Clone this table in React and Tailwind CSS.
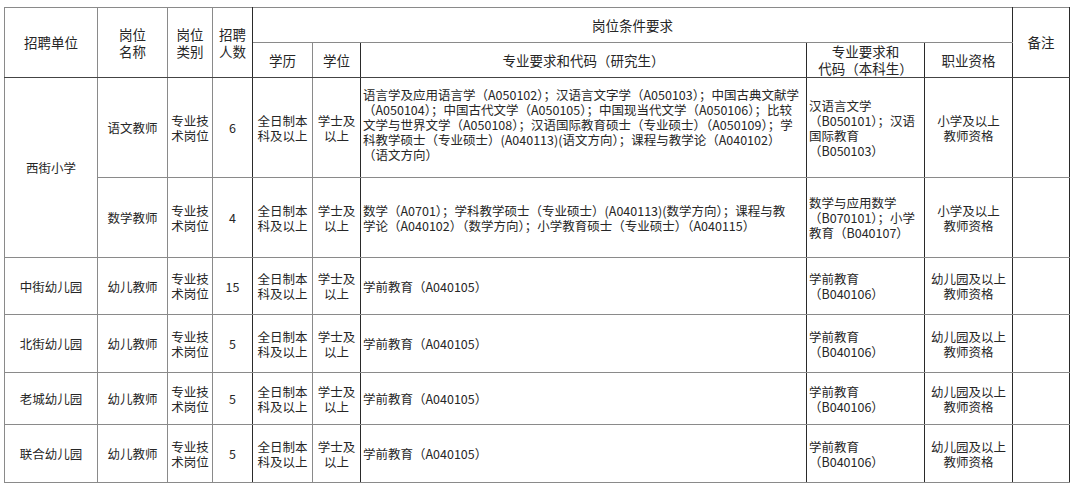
// border colours per column: [left, right]
const colBorder = [
  'border-l-[#8a8a8a] border-r-[#8a8a8a]',
  'border-l-[#8a8a8a] border-r-[#8a8a8a]',
  'border-l-[#8a8a8a] border-r-[#8a8a8a]',
  'border-l-[#8a8a8a] border-r-[#2a2a2a]',
  'border-l-[#2a2a2a] border-r-[#8a8a8a]',
  'border-l-[#8a8a8a] border-r-[#2a2a2a]',
  'border-l-[#2a2a2a] border-r-[#2a2a2a]',
  'border-l-[#2a2a2a] border-r-[#2a2a2a]',
  'border-l-[#2a2a2a] border-r-[#2a2a2a]',
  'border-l-[#2a2a2a] border-r-[#2a2a2a]',
];

const widths = [93, 70, 45, 40, 60, 48, 446, 118, 88, 57];

const cell = 'border border-solid border-t-[#8a8a8a] border-b-[#8a8a8a] align-middle p-0';

function Th({ col, className = '', children, ...rest }) {
  return (
    <th
      {...rest}
      className={`${cell} ${colBorder[col]} text-center font-normal text-[13.5px] leading-[17px] ${className}`}
    >
      {children}
    </th>
  );
}

function Td({ col, className = '', children, ...rest }) {
  return (
    <td {...rest} className={`${cell} ${colBorder[col]} text-[12.5px] leading-[15px] ${className}`}>
      {children}
    </td>
  );
}

const yuwen = [
  '语言学及应用语言学（A050102）；汉语言文字学（A050103）；中国古典文献学',
  '（A050104）；中国古代文学（A050105）；中国现当代文学（A050106）；比较',
  '文学与世界文学（A050108）；汉语国际教育硕士（专业硕士）（A050109）；学',
  '科教学硕士（专业硕士）(A040113)(语文方向）；课程与教学论（A040102）',
  '（语文方向）',
];

const shuxue = [
  '数学（A0701）；学科教学硕士（专业硕士）(A040113)(数学方向）；课程与教',
  '学论（A040102）（数学方向）；小学教育硕士（专业硕士）（A040115）',
];

const kinder = [
  { unit: '中街幼儿园', num: '15', h: 'h-[57px]' },
  { unit: '北街幼儿园', num: '5', h: 'h-[58px]' },
  { unit: '老城幼儿园', num: '5', h: 'h-[52px]' },
  { unit: '联合幼儿园', num: '5', h: 'h-[58px]' },
];

function Lines({ lines }) {
  return lines.map((l, i) => (
    <div key={i} className="whitespace-nowrap">
      {l}
    </div>
  ));
}

function Common({ num }) {
  return (
    <>
      <Td col={2} className="text-center">
        专业技
        <br />
        术岗位
      </Td>
      <Td col={3} className="text-center">
        {num}
      </Td>
      <Td col={4} className="text-center">
        全日制本
        <br />
        科及以上
      </Td>
      <Td col={5} className="text-center">
        学士及
        <br />
        以上
      </Td>
    </>
  );
}

export default function App() {
  return (
    <div className="w-[1080px] h-[494px] bg-white pt-[7px] pl-[4px] text-[#262626] font-['Noto_Sans_CJK_SC',sans-serif] overflow-hidden">
      <table className="table-fixed border-collapse w-[1065px] border-t border-t-[#2a2a2a]">
        <colgroup>
          {widths.map((w, i) => (
            <col key={i} style={{ width: w }} />
          ))}
        </colgroup>
        <thead>
          <tr className="h-[35px]">
            <Th col={0} rowSpan={2} className="border-b-[#444]">
              招聘单位
            </Th>
            <Th col={1} rowSpan={2} className="border-b-[#444]">
              岗位
              <br />
              名称
            </Th>
            <Th col={2} rowSpan={2} className="border-b-[#444]">
              岗位
              <br />
              类别
            </Th>
            <Th col={3} rowSpan={2} className="border-b-[#444]">
              招聘
              <br />
              人数
            </Th>
            <th
              colSpan={5}
              className={`${cell} border-l-[#2a2a2a] border-r-[#2a2a2a] text-center font-normal text-[13.5px] leading-[17px]`}
            >
              岗位条件要求
            </th>
            <Th col={9} rowSpan={2} className="border-b-[#444]">
              备注
            </Th>
          </tr>
          <tr className="h-[35px]">
            <Th col={4} className="border-b-[#444]">学历</Th>
            <Th col={5} className="border-b-[#444]">学位</Th>
            <Th col={6} className="border-b-[#444]">专业要求和代码（研究生）</Th>
            <Th col={7} className="border-b-[#444]">
              专业要求和
              <br />
              代码（本科生）
            </Th>
            <Th col={8} className="border-b-[#444]">职业资格</Th>
          </tr>
        </thead>
        <tbody>
          <tr className="h-[100px]">
            <Td col={0} rowSpan={2} className="text-center">
              西街小学
            </Td>
            <Td col={1} className="text-center">
              语文教师
            </Td>
            <Common num="6" />
            <Td col={6} className="pl-[2px] leading-[14px] pb-[6px]">
              <Lines lines={yuwen} />
            </Td>
            <Td col={7} className="pl-[2px]">
              <Lines lines={['汉语言文学', '（B050101）；汉语', '国际教育', '（B050103）']} />
            </Td>
            <Td col={8} className="text-center">
              小学及以上
              <br />
              教师资格
            </Td>
            <Td col={9} />
          </tr>
          <tr className="h-[80px]">
            <Td col={1} className="text-center">
              数学教师
            </Td>
            <Common num="4" />
            <Td col={6} className="pl-[2px] leading-[14px]">
              <Lines lines={shuxue} />
            </Td>
            <Td col={7} className="pl-[2px]">
              <Lines lines={['数学与应用数学', '（B070101）；小学', '教育（B040107）']} />
            </Td>
            <Td col={8} className="text-center">
              小学及以上
              <br />
              教师资格
            </Td>
            <Td col={9} />
          </tr>
          {kinder.map((k, i) => (
            <tr key={k.unit} className={k.h}>
              <Td
                col={0}
                className={`text-center ${i === kinder.length - 1 ? 'border-b-[#2a2a2a]' : ''}`}
              >
                {k.unit}
              </Td>
              <Td col={1} className="text-center">
                幼儿教师
              </Td>
              <Common num={k.num} />
              <Td col={6} className="pl-[2px]">
                学前教育（A040105）
              </Td>
              <Td col={7} className="pl-[2px]">
                <Lines lines={['学前教育', '（B040106）']} />
              </Td>
              <Td col={8} className="text-center">
                幼儿园及以上
                <br />
                教师资格
              </Td>
              <Td col={9} />
            </tr>
          ))}
        </tbody>
      </table>
    </div>
  );
}
